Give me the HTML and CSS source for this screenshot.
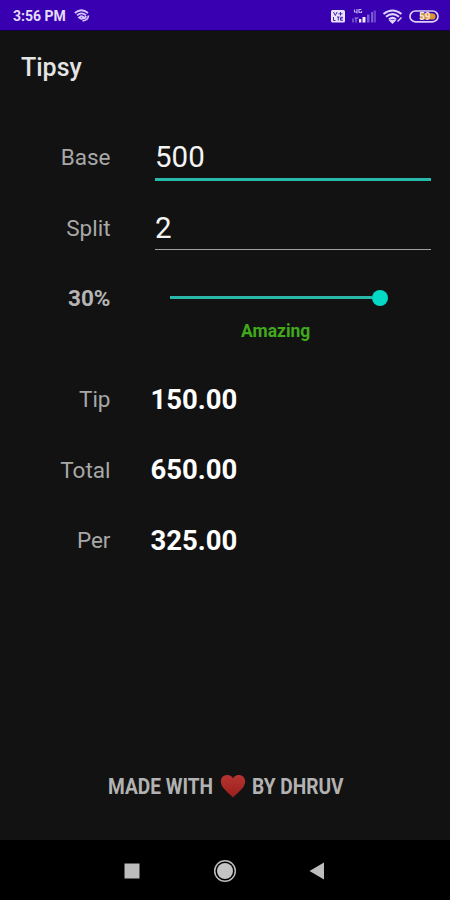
FILE: index.html
```html
<!DOCTYPE html>
<html lang="en">
<head>
<meta charset="utf-8">
<title>Tipsy</title>
<link rel="stylesheet" href="styles.css">
</head>
<body>
<div class="phone">
  <header class="status">
    <span class="clock">3:56 PM</span>
    <svg class="cast" width="16" height="13" viewBox="0 0 16 13" fill="none" stroke="#d5c5ff" stroke-width="1.700"><path d="M.8 4Q7.500-1.500 14 4M3 6.300Q7.500 2.500 12 6.300M5 8.500Q7.500 6 10 8.500L7.500 10ZM8.500 11.800Q14 11.500 14.500 6.500M8.500 9.500Q11.500 9.500 12 7"/></svg>
    <div class="indicators">
      <svg width="109" height="18" viewBox="330 6 109 18" fill="none">
        <rect x="331" y="9" width="14" height="12.500" rx="1.500" fill="#e8e2fa"/>
        <path d="M333.500 11l1.800 3.500 1.800-3.500M338.500 12.800h4M340.500 11v3.500M333.500 16v3.500h2M337 16h2.500M338.300 16v3.500M343 16.300h-2.500v3h2.500M340.500 17.800h2" stroke="#4920b8"/>
        <path d="M354.500 8.500v2.500h3M357 8v4.500M361.500 8.500h-2.500v3h2.500v-1.500" stroke="#b9a6ec" stroke-width="1.200"/>
        <path d="M353 17.500v4M356 17v4.500M354.500 17h4" stroke="#a88fe6"/>
        <path d="M359 21.500v-3.500h2.300v3.500zM362.500 21.500v-5.500h3v5.500z" fill="#eee9ff"/>
        <path d="M367 21.500v-8h2.500v8zM371 21.500v-10.500h2v10.500z" fill="#7959d3"/>
        <path d="M373.500 21.500v-12h2.500v12z" fill="#6542cc"/>
        <g stroke="#ded5fa" stroke-width="2"><path d="M383.500 13Q392.500 6 401.500 13M386 15.700Q392.500 10.500 399 15.700M389 18.200Q392.500 15.500 396 18.200"/><path d="M390 19.500l2.500 2.500 2.500-2.500zM397.500 20.500l4-4" fill="#ded5fa" stroke-width="1.400"/></g>
        <rect x="410" y="10" width="28" height="10.800" rx="5.400" stroke="#d9d0f4" stroke-width="1.700"/>
        <path d="M420 12.200h11.500q4 0 4 3.200t-4 3.200H420z" fill="#d9962f"/>
        <text class="charge" x="419" y="18.900">59</text>
      </svg>
    </div>
  </header>
  <h1 class="title">Tipsy</h1>
  <main class="form">
    <div class="row"><label class="label">Base</label><div class="field active">500</div></div>
    <div class="row"><label class="label">Split</label><div class="field">2</div></div>
    <div class="row"><label class="label percent">30%</label>
      <div class="slider"><span class="track"></span><span class="thumb"></span></div>
    </div>
    <div class="rating">Amazing</div>
    <div class="row"><span class="label">Tip</span><strong class="amount">150.00</strong></div>
    <div class="row"><span class="label">Total</span><strong class="amount">650.00</strong></div>
    <div class="row"><span class="label">Per</span><strong class="amount">325.00</strong></div>
  </main>
  <footer class="credit">
    <span class="made">MADE WITH</span>
    <svg class="heart" width="26" height="24" viewBox="0 0 26 24"><defs><linearGradient id="red" x2="0" y2="1"><stop stop-color="#b63430"/><stop offset="1" stop-color="#9b1f1d"/></linearGradient></defs><path fill="url(#red)" d="M13 4.500C11.500-.5 1 -.8 .8 7.500C.7 14 9 19.500 13 23.500C17 19.500 25.300 14 25.200 7.500C25-.8 14.500-.5 13 4.500Z"/></svg>
    <span class="by">BY DHRUV</span>
  </footer>
  <nav class="nav">
    <svg width="16" height="16" viewBox="0 0 16 16"><path fill="#bdbdbd" d="M.5.500h15v15H.5z"/></svg>
    <svg width="24" height="24" viewBox="0 0 24 24"><circle cx="12" cy="12" r="10.300" fill="none" stroke="#bdbdbd" stroke-width="1.500"/><circle cx="12" cy="12" r="8" fill="#c4c4c4"/></svg>
    <svg width="16" height="18" viewBox="0 0 16 18"><path fill="#bdbdbd" d="M15 .5v17L.5 9z"/></svg>
  </nav>
</div>
</body>
</html>
```
FILE: styles.css
```css
* { box-sizing: border-box; }
body { margin: 0; background: #121212; font-family: Roboto, sans-serif; }
.phone { width: 450px; height: 900px; display: flex; flex-direction: column; background: #121212; overflow: hidden; }
.status { height: 31px; flex: none; display: flex; align-items: center; padding: 1px 11px 0 13px; background: #3900b1; border-bottom: 1px solid #160044; }
.clock { width: 55px; font-size: 14px; font-weight: 700; color: #e4dcfa; white-space: nowrap; }
.cast { margin-left: 6px; }
.indicators { margin-left: auto; height: 18px; }
.indicators svg { display: block; }
.charge { font-size: 10px; font-weight: 700; fill: #f2e4e4; }
.title { margin: 22px 0 0 21px; height: 30px; line-height: 30px; font-size: 25px; font-weight: 500; color: #e4e4e4; }
.form { padding-top: 39px; }
.row { height: 70.5px; display: grid; grid-template-columns: 110.5px 1fr; column-gap: 40px; align-items: center; }
.label { text-align: right; font-size: 22.5px; color: #a8a8a8; }
.percent { font-weight: 700; color: #b5b5b5; }
.field { align-self: start; height: 43px; margin: 14px 19px 0 4.5px; padding-left: 0; line-height: 42px; font-size: 29.5px; color: #f4f4f4; border-bottom: 1px solid #a0a0a0; }
.field.active { height: 45px; border-bottom: 3px solid #27b9aa; }
.slider { display: flex; align-items: center; margin: -1px 0 0 19.5px; }
.track { width: 202px; height: 3px; background: #28b7a9; }
.thumb { width: 16px; height: 16px; border-radius: 50%; background: #03dac5; }
.rating { height: 33px; margin: -2.3px 0 0 241px; line-height: 0; font-size: 17.5px; font-weight: 700; color: #40a91c; }
.amount { font-size: 27.5px; font-weight: 700; color: #fff; }
.credit { margin-top: auto; height: 108px; padding: 0 0 0 107.5px; display: flex; align-items: center; font-size: 22.5px; font-weight: 700; color: #b2b2b2; white-space: nowrap; }
.made, .by { transform-origin: left center; transform: scaleX(.85); }
.made { width: 112px; }
.by { width: 93px; margin-left: 6px; }
.heart { flex: none; }
.nav { height: 60px; flex: none; display: flex; justify-content: space-between; align-items: center; padding: 1px 125px 0 124px; background: #000; }
```
